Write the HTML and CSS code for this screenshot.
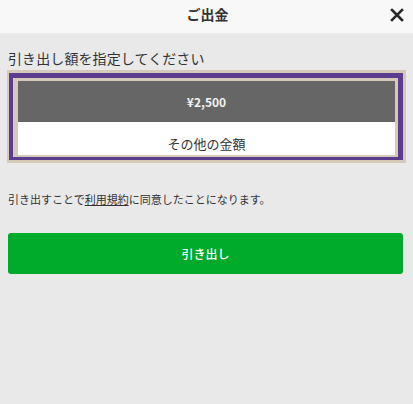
FILE: index.html
```html
<!DOCTYPE html>
<html lang="ja">
<head>
<meta charset="utf-8">
<link rel="stylesheet" href="styles.css">
</head>
<body>
<div class="page">
  <header class="header">
    <div class="title">ご出金</div>
    <button class="close" aria-label="閉じる">
      <svg width="14" height="14" viewBox="0 0 14 14"><path d="M2 2L12 12M12 2L2 12" stroke="#2a2a2a" stroke-width="2.6" stroke-linecap="square"/></svg>
    </button>
  </header>
  <main class="content">
    <div class="label">引き出し額を指定してください</div>
    <div class="focus-outer">
      <div class="focus-ring">
        <div class="focus-inner">
          <div class="option selected">¥2,500</div>
          <div class="option other">その他の金額</div>
        </div>
      </div>
    </div>
    <p class="terms">引き出すことで<a class="link" href="#">利用規約</a>に同意したことになります。</p>
    <button class="submit">引き出し</button>
  </main>
</div>
</body>
</html>
```
FILE: styles.css
```css
* { box-sizing: border-box; }
html, body { margin: 0; padding: 0; }
body {
  background: #e9e9e9;
  font-family: "Noto Sans CJK JP", "Noto Sans", sans-serif;
  color: #333;
  width: 413px;
  height: 404px;
  overflow: hidden;
}
.header {
  height: 34px;
  background: #f8f8f8;
  display: flex;
  align-items: center;
  justify-content: center;
  position: relative;
  border-bottom: 1px solid #ededed;
  padding-bottom: 5px;
}
.title {
  font-size: 14px;
  font-weight: bold;
  color: #333;
  padding-left: 2px;
}
.close {
  position: absolute;
  right: 8px;
  top: 7px;
  width: 16px;
  height: 16px;
  border: 0;
  background: none;
  padding: 0;
  display: flex;
  align-items: center;
  justify-content: center;
}
.content {
  padding: 14px 9px 0 8px;
}
.label {
  font-size: 14px;
  line-height: 20px;
  color: #333;
  letter-spacing: 0.1px;
}
.focus-outer {
  margin: 2px -2px 0 -1px;
  background: #d5c9b9;
  padding: 3px 3px 3px 2px;
}
.focus-ring {
  border: 5px solid #5b3c8f;
  border-left-width: 4px;
  border-bottom-width: 3px;
}
.focus-inner {
  background: #d5c9b9;
  padding: 3px 3px 2px 5px;
}
.option {
  display: flex;
  align-items: center;
  justify-content: center;
}
.selected {
  height: 41px;
  background: #666666;
  color: #f2f2f2;
  font-weight: bold;
  font-size: 12px;
}
.other {
  height: 33px;
  background: #ffffff;
  color: #333;
  font-size: 13px;
  padding-top: 9px;
}
.terms {
  margin: 28px 0 0 0;
  font-size: 11px;
  line-height: 16px;
  color: #333;
}
.link {
  color: #333;
  text-decoration: underline;
}
.submit {
  display: flex;
  align-items: center;
  justify-content: center;
  margin-top: 26px;
  width: 395px;
  height: 41px;
  background: #00aa2b;
  border: 0;
  border-radius: 3px;
  color: #fff;
  font-family: inherit;
  font-weight: 500;
  font-size: 12px;
}
```
